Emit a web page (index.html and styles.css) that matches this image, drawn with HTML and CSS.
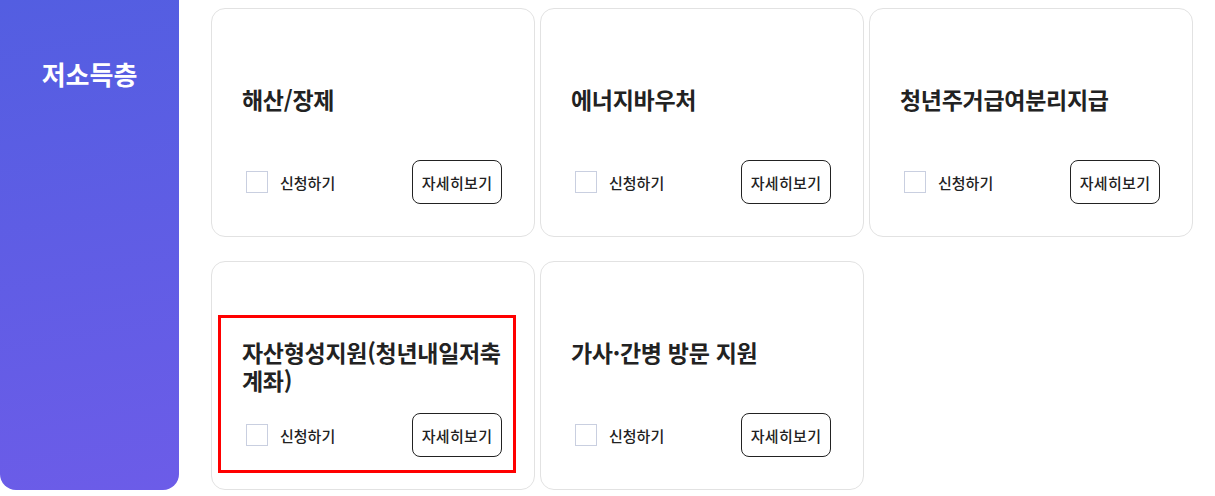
FILE: index.html
```html
<!DOCTYPE html>
<html lang="ko">
<head>
<meta charset="utf-8">
<title>저소득층</title>
<link rel="stylesheet" href="styles.css">
</head>
<body>
<div class="page">
  <aside class="side">
    <h2 class="side-title">저소득층</h2>
  </aside>
  <main class="grid">
    <div class="card">
      <h3 class="card-title">해산/장제</h3>
      <div class="card-foot">
        <label class="check"><span class="box"></span><span class="check-label">신청하기</span></label>
        <button class="more">자세히보기</button>
      </div>
    </div>
    <div class="card">
      <h3 class="card-title">에너지바우처</h3>
      <div class="card-foot">
        <label class="check"><span class="box"></span><span class="check-label">신청하기</span></label>
        <button class="more">자세히보기</button>
      </div>
    </div>
    <div class="card">
      <h3 class="card-title">청년주거급여분리지급</h3>
      <div class="card-foot">
        <label class="check"><span class="box"></span><span class="check-label">신청하기</span></label>
        <button class="more">자세히보기</button>
      </div>
    </div>
    <div class="card">
      <div class="highlight"></div>
      <h3 class="card-title">자산형성지원(청년내일저축계좌)</h3>
      <div class="card-foot">
        <label class="check"><span class="box"></span><span class="check-label">신청하기</span></label>
        <button class="more">자세히보기</button>
      </div>
    </div>
    <div class="card">
      <h3 class="card-title">가사·간병 방문 지원</h3>
      <div class="card-foot">
        <label class="check"><span class="box"></span><span class="check-label">신청하기</span></label>
        <button class="more">자세히보기</button>
      </div>
    </div>
  </main>
</div>
</body>
</html>
```
FILE: styles.css
```css
* { box-sizing: border-box; }
html, body { margin: 0; padding: 0; background: #fff; }
body {
  font-family: "Noto Sans CJK KR", "Noto Sans", sans-serif;
  color: #222;
}
.page {
  display: flex;
  align-items: flex-start;
  gap: 32px;
}
.side {
  width: 179px;
  height: 490px;
  flex: none;
  background: linear-gradient(170deg, #535ee1 0%, #6c5ce8 100%);
  border-radius: 0 0 16px 16px;
  padding-top: 55px;
}
.side-title {
  margin: 0;
  text-align: center;
  color: #fff;
  font-size: 26px;
  font-weight: 700;
  line-height: 38px;
  letter-spacing: 0;
}
.grid {
  display: grid;
  grid-template-columns: repeat(3, 324px);
  column-gap: 5px;
  row-gap: 24px;
  padding-top: 8px;
}
.card {
  position: relative;
  height: 229px;
  border: 1px solid #e2e2e2;
  border-radius: 14px;
  padding: 76px 32px 32px 30px;
  display: flex;
  flex-direction: column;
}
.card-title {
  margin: 0;
  font-size: 23px;
  font-weight: 700;
  line-height: 28px;
  letter-spacing: -0.3px;
  color: #222;
  word-break: normal;
}
.card-foot {
  margin-top: auto;
  display: flex;
  align-items: center;
  justify-content: space-between;
}
.check {
  display: flex;
  align-items: center;
  gap: 12px;
  padding-left: 4px;
}
.box {
  width: 22px;
  height: 22px;
  border: 1px solid #c9cfe0;
  background: #fff;
}
.check-label {
  font-size: 15px;
  font-weight: 500;
  letter-spacing: 0;
  color: #222;
}
.more {
  width: 90px;
  height: 44px;
  border: 1px solid #222;
  border-radius: 8px;
  background: #fff;
  font-family: inherit;
  font-size: 15px;
  font-weight: 500;
  letter-spacing: 0.3px;
  color: #222;
  padding: 0;
}
.highlight {
  position: absolute;
  left: 6px;
  top: 53px;
  width: 298px;
  height: 158px;
  border: 3px solid #ff0000;
  pointer-events: none;
}
```
